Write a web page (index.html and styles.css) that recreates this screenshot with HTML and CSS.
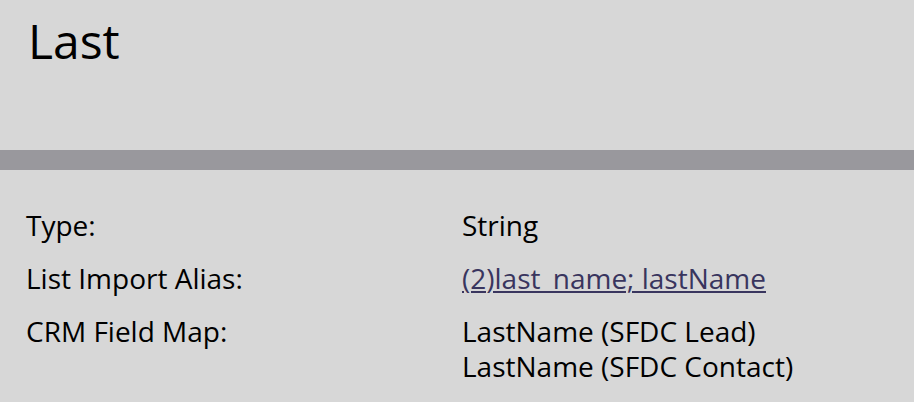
FILE: index.html
```html
<!DOCTYPE html>
<html>
<head>
<meta charset="utf-8">
<link rel="stylesheet" href="styles.css">
</head>
<body>
<div class="header">
  <h1 class="title">Last</h1>
</div>
<div class="bar"></div>
<div class="details">
  <div class="row">
    <div class="label">Type:</div>
    <div class="value">String</div>
  </div>
  <div class="row">
    <div class="label">List Import Alias:</div>
    <div class="value"><a class="link" href="#">(2)last_name; lastName</a></div>
  </div>
  <div class="row">
    <div class="label">CRM Field Map:</div>
    <div class="value">LastName (SFDC Lead)<br>LastName (SFDC Contact)</div>
  </div>
</div>
</body>
</html>
```
FILE: styles.css
```css
html, body {
  margin: 0;
  padding: 0;
  background: #d7d7d7;
  font-family: "Open Sans", "Noto Sans", sans-serif;
  color: #000;
}
.header {
  height: 150px;
  padding: 0 0 0 28px;
  box-sizing: border-box;
}
.title {
  margin: 0;
  padding-top: 8px;
  font-weight: 400;
  font-size: 48px;
  line-height: 66px;
}
.bar {
  height: 20px;
  background: #99989d;
}
.details {
  padding: 38px 0 0 26px;
  display: flex;
  flex-direction: column;
  gap: 18px;
}
.row {
  display: grid;
  grid-template-columns: 436px 1fr;
  font-size: 28px;
  line-height: 35px;
}
.link {
  color: #39355e;
  text-decoration: underline;
  text-decoration-thickness: 2px;
  text-underline-offset: 2px;
}
```
